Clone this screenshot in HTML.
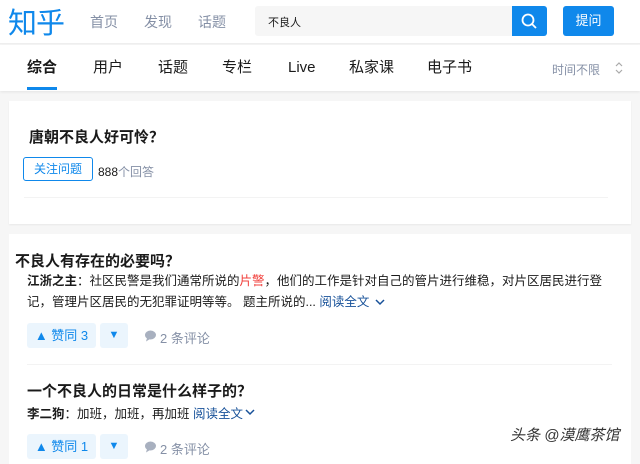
<!DOCTYPE html>
<html><head><meta charset="utf-8"><style>
*{margin:0;padding:0;box-sizing:border-box}
body{width:640px;height:455px;overflow:hidden;background:#f6f6f6;font-family:"Liberation Sans","Noto Sans CJK SC",sans-serif;position:relative;color:#1a1a1a}
.a{position:absolute;white-space:nowrap}
.t{font-size:15px;line-height:20px;top:58px}
</style></head><body>
<div class="a" style="left:0;top:0;width:640px;height:44px;background:#fff;border-bottom:1px solid #eee"></div>
<div class="a" style="left:8px;top:3px;font-size:29px;color:#0f88eb;letter-spacing:-1px;line-height:36px;font-family:'Noto Sans CJK SC',sans-serif">知乎</div>
<div class="a" style="left:90px;top:12px;font-size:14px;color:#8590a6">首页</div>
<div class="a" style="left:144px;top:12px;font-size:14px;color:#8590a6">发现</div>
<div class="a" style="left:198px;top:12px;font-size:14px;color:#8590a6">话题</div>
<div class="a" style="left:255px;top:6px;width:258px;height:30px;background:#f6f6f6;border-radius:3px 0 0 3px"></div>
<div class="a" style="left:268px;top:14px;font-size:11px;color:#1a1a1a">不良人</div>
<div class="a" style="left:512px;top:6px;width:35px;height:30px;background:#0f88eb;border-radius:0 3px 3px 0"></div>
<svg class="a" style="left:520px;top:12px" width="18" height="18" viewBox="0 0 18 18"><circle cx="8" cy="8" r="5.5" fill="none" stroke="#fff" stroke-width="1.8"/><path d="M12 12l4 4" stroke="#fff" stroke-width="1.8"/></svg>
<div class="a" style="left:563px;top:6px;width:51px;height:30px;background:#0f88eb;border-radius:3px;color:#fff;font-size:13px;text-align:center;line-height:30px">提问</div>
<div class="a" style="left:0;top:45px;width:640px;height:46px;background:#fff;box-shadow:0 1px 3px rgba(0,0,0,.08)"></div>
<div class="a t" style="left:27px;font-weight:bold">综合</div>
<div class="a" style="left:27px;top:87px;width:30px;height:3px;background:#0f88eb"></div>
<div class="a t" style="left:93px">用户</div>
<div class="a t" style="left:158px">话题</div>
<div class="a t" style="left:222px">专栏</div>
<div class="a t" style="left:288px">Live</div>
<div class="a t" style="left:349px">私家课</div>
<div class="a t" style="left:427px">电子书</div>
<div class="a" style="left:552px;top:61px;font-size:12px;color:#8590a6">时间不限</div>
<svg class="a" style="left:614px;top:60px" width="10" height="16" viewBox="0 0 10 16"><path d="M2 6l3-3 3 3M2 10l3 3 3-3" fill="none" stroke="#aaa" stroke-width="1.2"/></svg>
<div class="a" style="left:9px;top:101px;width:622px;height:123px;background:#fff;box-shadow:0 1px 2px rgba(0,0,0,.06)"></div>
<div class="a" style="left:29px;top:126px;font-size:15px;font-weight:bold">唐朝不良人好可怜？</div>
<div class="a" style="left:23px;top:157px;width:70px;height:24px;border:1px solid #0f88eb;border-radius:3px;color:#0f88eb;font-size:12px;text-align:center;line-height:22px">关注问题</div>
<div class="a" style="left:98px;top:163px;font-size:12px;color:#1a1a1a">888<span style="color:#8590a6">个回答</span></div>
<div class="a" style="left:24px;top:197px;width:584px;height:1px;background:#f3f3f3"></div>
<div class="a" style="left:9px;top:234px;width:622px;height:230px;background:#fff"></div>
<div class="a" style="left:15px;top:250px;font-size:15px;font-weight:bold">不良人有存在的必要吗？</div>
<div class="a" style="left:27px;top:271px;font-size:12.5px;line-height:21px;color:#1a1a1a"><b>江浙之主</b>：社区民警是我们通常所说的<span style="color:#f1403c">片警</span>，他们的工作是针对自己的管片进行维稳，对片区居民进行登<br>记，管理片区居民的无犯罪证明等等。 题主所说的... <span style="color:#175199">阅读全文</span></div>
<svg class="a" style="left:374px;top:297px" width="12" height="10" viewBox="0 0 12 10"><path d="M2 3l4 4 4-4" fill="none" stroke="#175199" stroke-width="1.5"/></svg>
<div class="a" style="left:27px;top:323px;width:69px;height:25px;background:#ebf5fd;border-radius:3px;color:#0f88eb;font-size:13px;line-height:25px;text-align:center">▲ 赞同 3</div>
<div class="a" style="left:100px;top:323px;width:28px;height:25px;background:#ebf5fd;border-radius:3px;color:#0f88eb;font-size:11px;line-height:25px;text-align:center">▼</div>
<svg class="a" style="left:144px;top:330px" width="13" height="12" viewBox="0 0 13 12"><ellipse cx="6.5" cy="5" rx="5.5" ry="4.5" fill="#a8b0bf"/><path d="M3 8l-1 3.5 4-2.5z" fill="#a8b0bf"/></svg>
<div class="a" style="left:160px;top:328px;font-size:13px;color:#8590a6">2 条评论</div>
<div class="a" style="left:27px;top:364px;width:585px;height:1px;background:#f3f3f3"></div>
<div class="a" style="left:27px;top:380px;font-size:15px;font-weight:bold">一个不良人的日常是什么样子的？</div>
<div class="a" style="left:27px;top:403px;font-size:12.5px;color:#1a1a1a"><b>李二狗</b>：加班，加班，再加班 <span style="color:#175199">阅读全文</span></div>
<svg class="a" style="left:244px;top:407px" width="12" height="10" viewBox="0 0 12 10"><path d="M2 3l4 4 4-4" fill="none" stroke="#175199" stroke-width="1.5"/></svg>
<div class="a" style="left:27px;top:434px;width:69px;height:25px;background:#ebf5fd;border-radius:3px;color:#0f88eb;font-size:13px;line-height:25px;text-align:center">▲ 赞同 1</div>
<div class="a" style="left:100px;top:434px;width:28px;height:25px;background:#ebf5fd;border-radius:3px;color:#0f88eb;font-size:11px;line-height:25px;text-align:center">▼</div>
<svg class="a" style="left:144px;top:441px" width="13" height="12" viewBox="0 0 13 12"><ellipse cx="6.5" cy="5" rx="5.5" ry="4.5" fill="#a8b0bf"/><path d="M3 8l-1 3.5 4-2.5z" fill="#a8b0bf"/></svg>
<div class="a" style="left:160px;top:439px;font-size:13px;color:#8590a6">2 条评论</div>
<div class="a" style="left:510px;top:424px;font-size:15px;color:#333;font-style:italic">头条 @漠鹰茶馆</div>
</body></html>
